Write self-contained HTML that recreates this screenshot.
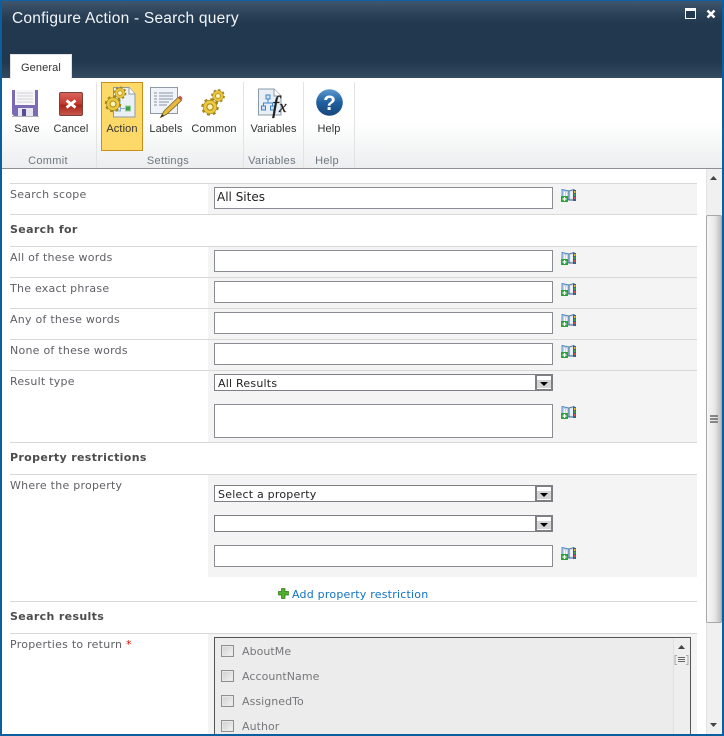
<!DOCTYPE html>
<html>
<head>
<meta charset="utf-8">
<style>
html,body{margin:0;padding:0;width:724px;height:736px;overflow:hidden;background:#fff}
body{position:relative;font-family:"DejaVu Sans",sans-serif;font-size:11px;color:#676767}
.a,.l,.h,.i,.s,.ln,.g,.rb,.sep,.cb,.cl,.gl{position:absolute}
.ln{left:10px;width:687px;height:1px;background:#d8d8d8}
.g{left:208px;width:489px;background:#f4f4f4}
.l{left:10px;white-space:nowrap;line-height:14px;font-size:11px;letter-spacing:.25px;color:#5f6066}
.h{left:10px;white-space:nowrap;font-weight:bold;line-height:14px;font-size:11px;letter-spacing:.35px;color:#4c4c4c}
.i{left:214px;width:337px;height:20px;border:1px solid #898c93;background:#fff;color:#222;line-height:19px;text-indent:2px;white-space:nowrap}
.s{left:214px;width:337px;height:15px;border:1px solid #7d7f84;background:#fff;color:#222;line-height:18px;text-indent:3px;letter-spacing:.22px;white-space:nowrap}
.s i{position:absolute;right:-1px;top:-1px;width:18px;height:17px;box-sizing:border-box;border:2px solid #7d7f84;background:linear-gradient(#fff 0,#fff 4px,#d4d4d4 4px,#d4d4d4 12px,#fff 12px)}
.s i:after{content:"";position:absolute;left:3px;top:6px;width:0;height:0;border:4px solid transparent;border-top:4px solid #000;border-bottom:0}
.rb{font-family:"Liberation Sans",sans-serif;font-size:11px;letter-spacing:.12px;color:#333;line-height:14px;text-align:center;white-space:nowrap}
.gl{font-family:"Liberation Sans",sans-serif;font-size:11px;letter-spacing:.3px;color:#6d7681;line-height:14px;text-align:center;white-space:nowrap;top:154px}
.sep{top:82px;width:1px;height:86px;background:#e1e3e5}
.cb{left:221px;width:11px;height:10px;border:1px solid #8f8f8f;background:linear-gradient(135deg,#cfcfcf,#f4f4f4);box-shadow:inset 0 0 0 1px #e8e8e8}
.cl{left:242px;white-space:nowrap;color:#77777b;line-height:14px;letter-spacing:.05px}
svg{position:absolute;overflow:visible}
</style>
</head>
<body>
<svg width="0" height="0" style="position:absolute"><defs>
<g id="book">
<path d="M1 .5L8 2V11L1 9.500Z" fill="#bcd5ec" stroke="#4f86ba" stroke-width=".9"/>
<path d="M8 2L13 .5V11L8 11Z" fill="#dbe6f0" stroke="#3b5f86" stroke-width=".9"/>
<rect x="12" y="1" width="3" height="11" fill="#3c5f87"/>
<rect x="13" y="2" width="1.500" height="2" fill="#e8c23c"/><rect x="13" y="5" width="1.500" height="2" fill="#45a84a"/><rect x="13" y="8" width="1.500" height="2" fill="#d9534f"/>
<path d="M3.500 3v4M5.500 3.500v4M9.500 4h2M9.500 6h2M9.500 8h2" stroke="#fff" stroke-width=".9"/>
<rect x="0" y="7" width="7" height="6" fill="#2ea03c"/>
<path d="M3.500 8v4M1.500 10h4" stroke="#fff" stroke-width="1.300"/>
</g>
<g id="gear">
<circle r="6.600" fill="none" stroke="#a4851a" stroke-width="3" stroke-dasharray="2.600 2.580"/>
<circle r="4.700" fill="none" stroke="#a4851a" stroke-width="3.800"/>
<circle r="4.700" fill="none" stroke="#ecc83f" stroke-width="2.600"/>
<circle r="2.700" fill="#fff4bd" stroke="#b2921f" stroke-width=".7"/>
</g>
</defs></svg>

<!-- title bar -->
<div class="a" style="left:0;top:0;width:724px;height:78px;background:linear-gradient(#41576d 0,#2b4259 14px,#21384f 24px,#21384f 62px,#33495f 77px)"></div>
<div class="a" style="left:12px;top:9px;font-family:'Liberation Sans',sans-serif;font-size:15.500px;letter-spacing:.23px;line-height:20px;color:#f2f5f8;white-space:nowrap">Configure Action - Search query</div>
<div class="a" style="left:685px;top:8px;width:9px;border:1px solid #fff;border-top:3px solid #fff;height:7px;background:#22394f"></div>
<svg style="left:706px;top:9px" width="11" height="11"><path d="M1.500 1.500L8.500 8.500M8.500 1.500L1.500 8.500" stroke="#fff" stroke-width="2.400"/></svg>

<!-- tab -->
<div class="a" style="left:10px;top:54px;width:60px;background:#fff;border:1px solid #dfe3e7;border-bottom:0;height:24px;font-family:'Liberation Sans',sans-serif;font-size:11px;letter-spacing:.12px;color:#333;text-align:center;line-height:27px;z-index:2">General</div>

<!-- ribbon -->
<div class="a" style="left:2px;top:78px;width:720px;height:90px;background:linear-gradient(#fff 0,#fff 44px,#f6f7f7 65px,#eceef0 90px)"></div>
<div class="a" style="left:2px;top:168px;width:720px;height:1px;background:#8c8f93"></div>
<div class="sep" style="left:96px"></div>
<div class="sep" style="left:243px"></div>
<div class="sep" style="left:303px"></div>
<div class="sep" style="left:354px"></div>
<div class="a" style="left:101px;top:82px;width:40px;height:67px;background:#fdd96a;border:1px solid #c88f1c"></div>

<!-- save -->
<svg style="left:12px;top:90px" width="28" height="28">
<path d="M0 0H26V26H2L0 24Z" fill="#7c6bb4"/>
<rect x="3" y="0" width="20" height="15" fill="#f7f7f7"/>
<path d="M5 3h16M5 6h16M5 9h16M5 12h16" stroke="#cfcfd8" stroke-width="1"/>
<rect x="6" y="18" width="15" height="8" fill="#e6e6f0"/>
<rect x="10" y="19" width="4" height="7" fill="#5b4c96"/>
<rect x="0" y="26" width="27" height="1" fill="#b4b4b4"/>
</svg>
<!-- cancel -->
<svg style="left:59px;top:92px" width="24" height="24">
<defs><linearGradient id="cg" x1="0" y1="0" x2="0" y2="1"><stop offset="0" stop-color="#d9655c"/><stop offset=".5" stop-color="#c43a2e"/><stop offset=".55" stop-color="#a92419"/><stop offset="1" stop-color="#c95a4c"/></linearGradient></defs>
<rect x=".5" y=".5" width="23" height="23" rx="1.500" fill="url(#cg)" stroke="#7b4038"/>
<path d="M7.500 8.500L16.500 15.500M16.500 8.500L7.500 15.500" stroke="#fff" stroke-width="2.800"/>
</svg>
<!-- action -->
<svg style="left:106px;top:87px" width="32" height="32">
<path d="M7.500 .5H23L29 7V30H7.500Z" fill="#eaf0f4" stroke="#8d9aa7"/>
<path d="M23 .5V7H29" fill="#fff" stroke="#8d9aa7"/>
<rect x="9.500" y="19" width="5" height="5" fill="#dce8f2" stroke="#86aed0"/>
<rect x="19.500" y="19" width="5" height="5" fill="#3aa040" stroke="#9ccf9f"/>
<path d="M14.500 21.500H19.500M14 12V21" stroke="#86aed0" fill="none"/>
<use href="#gear" transform="translate(14,6) scale(.8)"/>
<use href="#gear" transform="translate(7,17) scale(1.02)"/>
</svg>
<!-- labels -->
<svg style="left:150px;top:87px" width="33" height="32">
<rect x=".5" y=".5" width="27" height="26" fill="#f0f4f8" stroke="#8d99a6"/>
<path d="M4 6h3M9 6h14M4 9h3M9 9h14M4 12h3M9 12h14M4 15h3M9 15h10M4 18h3M9 18h8" stroke="#8a95a6"/>
<path d="M10.500 30.500L14 24L28 10.500L31.500 13.500L17 27Z" fill="#e8b93c" stroke="#7a6428" stroke-width=".8"/>
<path d="M28 10.500L31.500 13.500L32.500 11L30 8.500Z" fill="#c8564e"/>
<path d="M10.500 30.500L12 27L14.500 29Z" fill="#333"/>
</svg>
<!-- common -->
<svg style="left:201px;top:89px" width="26" height="28">
<use href="#gear" transform="translate(17,7) scale(.85)"/>
<use href="#gear" transform="translate(9,18) scale(1.08)"/>
</svg>
<!-- variables -->
<svg style="left:257px;top:88px" width="33" height="31">
<path d="M1.500 1H17L24 8V27H1.500Z" fill="#e8eff6" stroke="#8b99a8"/>
<path d="M17 1V8H24" fill="#fff" stroke="#8b99a8"/>
<rect x="9" y="7" width="4" height="4" fill="#cfe3f4" stroke="#3f86c9"/>
<rect x="4.500" y="18" width="4" height="4" fill="#cfe3f4" stroke="#3f86c9"/>
<rect x="13.500" y="18" width="4" height="4" fill="#cfe3f4" stroke="#3f86c9"/>
<path d="M11 11V15M6.500 18V15H15.500V18" fill="none" stroke="#3f86c9"/>
<text x="15" y="25" font-family="Liberation Serif,serif" font-style="italic" font-size="24" fill="#222" stroke="#222" stroke-width=".3">f</text>
<text x="22" y="24" font-family="Liberation Serif,serif" font-style="italic" font-size="17" fill="#222" stroke="#222" stroke-width=".3">x</text>
</svg>
<!-- help -->
<svg style="left:316px;top:89px" width="27" height="27">
<defs><linearGradient id="hg" x1="0" y1="0" x2="0" y2="1"><stop offset="0" stop-color="#5c9ad0"/><stop offset=".5" stop-color="#1f5f9d"/><stop offset="1" stop-color="#17477c"/></linearGradient></defs>
<circle cx="13.500" cy="13.500" r="13.300" fill="url(#hg)"/>
<text x="13.500" y="21" text-anchor="middle" font-family="Liberation Sans,sans-serif" font-weight="bold" font-size="21" fill="#fff">?</text>
</svg>

<div class="rb" style="left:7px;top:122px;width:40px">Save</div>
<div class="rb" style="left:50px;top:122px;width:42px">Cancel</div>
<div class="rb" style="left:101px;top:122px;width:42px">Action</div>
<div class="rb" style="left:146px;top:122px;width:40px">Labels</div>
<div class="rb" style="left:189px;top:122px;width:50px">Common</div>
<div class="rb" style="left:246px;top:122px;width:55px">Variables</div>
<div class="rb" style="left:309px;top:122px;width:40px">Help</div>
<div class="gl" style="left:8px;width:80px">Commit</div>
<div class="gl" style="left:128px;width:80px">Settings</div>
<div class="gl" style="left:247px;width:50px">Variables</div>
<div class="gl" style="left:307px;width:40px">Help</div>

<!-- gray panels -->
<div class="g" style="top:184px;height:30px"></div>
<div class="g" style="top:247px;height:195px"></div>
<div class="g" style="top:475px;height:102px"></div>
<div class="g" style="top:634px;height:100px"></div>

<div class="ln" style="top:183px"></div>
<div class="ln" style="top:214px"></div>
<div class="ln" style="top:246px"></div>
<div class="ln" style="top:277px"></div>
<div class="ln" style="top:308px"></div>
<div class="ln" style="top:339px"></div>
<div class="ln" style="top:370px"></div>
<div class="ln" style="top:442px"></div>
<div class="ln" style="top:474px"></div>
<div class="ln" style="top:601px"></div>
<div class="ln" style="top:633px"></div>

<div class="l" style="top:188px">Search scope</div>
<div class="h" style="top:223px">Search for</div>
<div class="l" style="top:251px">All of these words</div>
<div class="l" style="top:282px">The exact phrase</div>
<div class="l" style="top:313px">Any of these words</div>
<div class="l" style="top:344px">None of these words</div>
<div class="l" style="top:375px">Result type</div>
<div class="h" style="top:451px">Property restrictions</div>
<div class="l" style="top:479px">Where the property</div>
<div class="h" style="top:610px">Search results</div>
<div class="l" style="top:638px">Properties to return <span style="color:#e00000">*</span></div>

<div class="i" style="top:187px;font-size:12px">All Sites</div>
<div class="i" style="top:250px"></div>
<div class="i" style="top:281px"></div>
<div class="i" style="top:312px"></div>
<div class="i" style="top:343px"></div>
<div class="s" style="top:374px">All Results<i></i></div>
<div class="i" style="top:404px;height:32px"></div>
<div class="s" style="top:485px">Select a property<i></i></div>
<div class="s" style="top:515px"><i></i></div>
<div class="i" style="top:545px"></div>

<svg style="left:561px;top:189px" width="16" height="15"><use href="#book"/></svg>
<svg style="left:561px;top:252px" width="16" height="15"><use href="#book"/></svg>
<svg style="left:561px;top:283px" width="16" height="15"><use href="#book"/></svg>
<svg style="left:561px;top:314px" width="16" height="15"><use href="#book"/></svg>
<svg style="left:561px;top:345px" width="16" height="15"><use href="#book"/></svg>
<svg style="left:561px;top:406px" width="16" height="15"><use href="#book"/></svg>
<svg style="left:561px;top:547px" width="16" height="15"><use href="#book"/></svg>

<!-- add link -->
<svg style="left:278px;top:588px" width="11" height="11"><path d="M3.500 .5H7V3.500H10.500V7H7V10.500H3.500V7H.5V3.500H3.500Z" fill="#4fae2e" stroke="#2f7a1c" stroke-width=".7"/></svg>
<div class="a" style="left:292px;top:588px;color:#0f72c4;line-height:14px;white-space:nowrap;letter-spacing:.22px">Add property restriction</div>

<!-- list box -->
<div class="a" style="left:214px;top:637px;width:475px;height:97px;background:#ececec;border:1px solid #555;border-bottom:0"></div>
<div class="a" style="left:673px;top:638px;width:16px;height:96px;background:#eeeeee;border-left:1px solid #e0e0e0"></div>
<svg style="left:678px;top:645px" width="9" height="5"><path d="M0 4H7L3.500 0Z" fill="#444"/></svg>
<svg style="left:674px;top:655px" width="16" height="12"><path d="M3 .5H1V9.500H3M12 .5H14V9.500H12" fill="none" stroke="#aaa"/><path d="M4 2.500H11M4 4.500H11M4 6.500H11" stroke="#666"/></svg>
<div class="cb" style="top:645px"></div><div class="cl" style="top:645px">AboutMe</div>
<div class="cb" style="top:670px"></div><div class="cl" style="top:670px">AccountName</div>
<div class="cb" style="top:695px"></div><div class="cl" style="top:695px">AssignedTo</div>
<div class="cb" style="top:720px"></div><div class="cl" style="top:720px">Author</div>

<!-- main scrollbar -->
<div class="a" style="left:706px;top:169px;width:16px;height:565px;background:#f0f0f0;border-left:1px solid #e4e4e4;box-sizing:border-box"></div>
<svg style="left:710px;top:176px" width="9" height="5"><path d="M0 4H7L3.500 0Z" fill="#444"/></svg>
<svg style="left:710px;top:723px" width="9" height="5"><path d="M0 0H7L3.500 4Z" fill="#444"/></svg>
<div class="a" style="left:706px;top:215px;width:14px;height:406px;border:1px solid #a8a8a8;border-radius:2px;background:linear-gradient(90deg,#f6f6f6,#e8e8e8 55%,#bdbdbd)"></div>
<svg style="left:710px;top:415px" width="9" height="10"><path d="M0 1H8M0 4H8M0 7H8" stroke="#666" stroke-width="1.400"/></svg>

<!-- window border -->
<div class="a" style="left:0;top:0;width:724px;height:1px;background:#0b62a8"></div>
<div class="a" style="left:0;top:0;width:2px;height:736px;background:#0b5f9f"></div>
<div class="a" style="left:722px;top:0;width:2px;height:736px;background:#0b5f9f"></div>
<div class="a" style="left:0;top:734px;width:724px;height:2px;background:#0b5f9f"></div>
</body>
</html>
